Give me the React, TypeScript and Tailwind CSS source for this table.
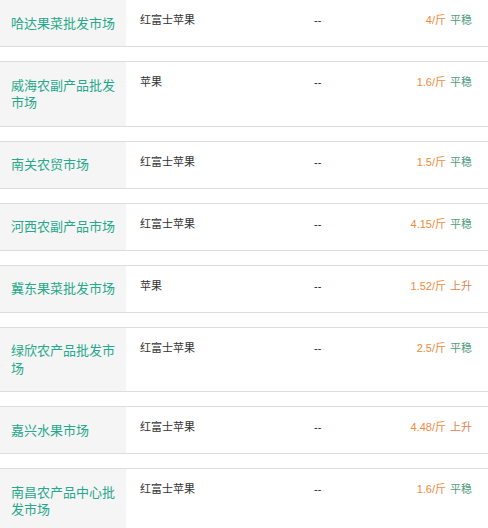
const rows = [
  { name: "哈达果菜批发市场", kind: "红富士苹果", price: "4", trend: "平稳" },
  { name: "威海农副产品批发市场", kind: "苹果", price: "1.6", trend: "平稳" },
  { name: "南关农贸市场", kind: "红富士苹果", price: "1.5", trend: "平稳" },
  { name: "河西农副产品市场", kind: "红富士苹果", price: "4.15", trend: "平稳" },
  { name: "冀东果菜批发市场", kind: "苹果", price: "1.52", trend: "上升" },
  { name: "绿欣农产品批发市场", kind: "红富士苹果", price: "2.5", trend: "平稳" },
  { name: "嘉兴水果市场", kind: "红富士苹果", price: "4.48", trend: "上升" },
  { name: "南昌农产品中心批发市场", kind: "红富士苹果", price: "1.6", trend: "平稳" },
];

export default function App() {
  return (
    <div
      className="w-[488px] h-[528px] overflow-hidden bg-white"
      style={{ fontFamily: '"Liberation Sans", "Noto Sans CJK SC", sans-serif' }}
    >
      <div className="-mt-px flex flex-col gap-[14px]">
        {rows.map((r) => (
          <div key={r.name} className="flex border-y border-[#dddddd]">
            <div className="w-[126px] shrink-0 bg-[#f5f5f5] px-[11px] pt-[14.5px] pb-[14px] flex items-center text-[13px] leading-[17.5px] text-[#25a88b]">
              {r.name}
            </div>
            <div className="flex flex-1 items-start pt-[12px] text-[11px] leading-[16px] text-[#333]">
              <div className="w-[188px] pl-[14px]">{r.kind}</div>
              <div className="text-[#222]">--</div>
              <div className="ml-auto pr-[16px]">
                <span className="text-[#ef8a3d]">{r.price}/斤</span>
                <span
                  className={
                    r.trend === "上升" ? "ml-[4px] text-[#e0844b]" : "ml-[4px] text-[#4f9d7d]"
                  }
                >
                  {r.trend}
                </span>
              </div>
            </div>
          </div>
        ))}
      </div>
    </div>
  );
}
